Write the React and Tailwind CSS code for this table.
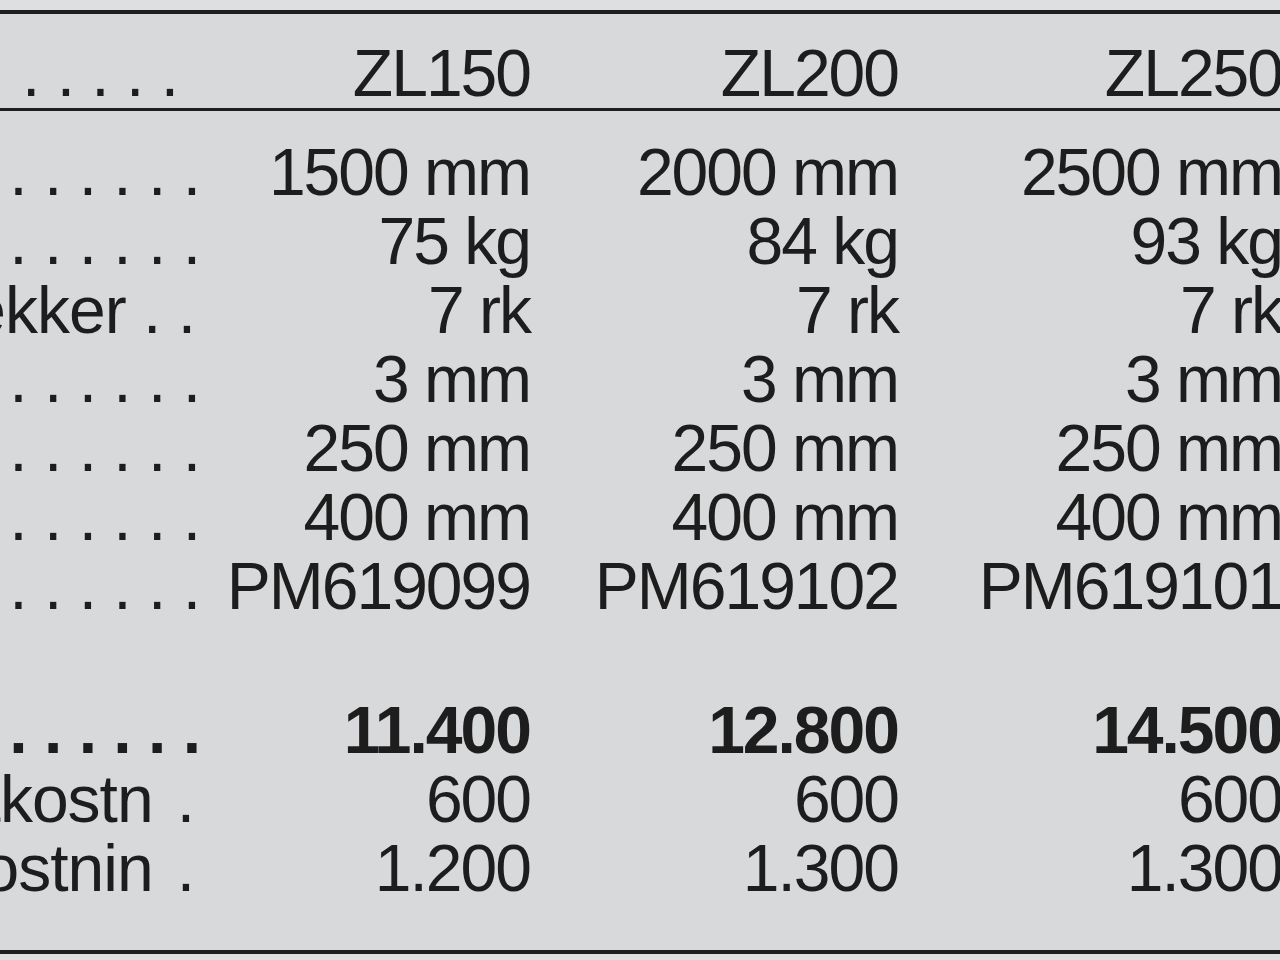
import React from "react";

const rows = [
  { label: "Arbeidsbredde . . . . . . . . . .", values: ["1500 mm", "2000 mm", "2500 mm"] },
  { label: "Vekt . . . . . . . . . . . . . .", values: ["75 kg", "84 kg", "93 kg"] },
  { label: "Antall tinderekker . .", values: ["7 rk", "7 rk", "7 rk"], pad: "pr-[5px]" },
  { label: "Tindetykkelse . . . . . . . . . .", values: ["3 mm", "3 mm", "3 mm"] },
  { label: "Tindelengde . . . . . . . . . . .", values: ["250 mm", "250 mm", "250 mm"] },
  { label: "Høyde . . . . . . . . . . . . . .", values: ["400 mm", "400 mm", "400 mm"] },
  { label: "Varenummer . . . . . . . . . . .", values: ["PM619099", "PM619102", "PM619101"] },
];

const prices = [
  { label: "Pris eks. mva . . . . . . . . . . .", values: ["11.400", "12.800", "14.500"], bold: true },
  { label: "Fraktkostn", tail: true, values: ["600", "600", "600"], pad: "pr-[6px]" },
  { label: "Monteringskostnin", tail: true, values: ["1.200", "1.300", "1.300"], pad: "pr-[6px]" },
];

const colW = ["w-[330px]", "w-[368px]", "w-[384px]"];

function Row({ label, values, bold, tail, pad = "" }) {
  return (
    <div className={`flex h-[69px] items-center leading-[69px] ${bold ? "font-bold" : ""}`}>
      <div className={`flex w-[200px] shrink-0 justify-end overflow-hidden whitespace-pre tracking-[-1px] ${pad}`}>
        <span>
          {label}
          {tail && <span className="ml-[24px]">.</span>}
        </span>
      </div>
      {values.map((v, i) => (
        <div
          key={i}
          className={`${colW[i]} shrink-0 whitespace-nowrap text-right ${bold ? "tracking-[-2px]" : "tracking-[-2px]"}`}
        >
          {v}
        </div>
      ))}
    </div>
  );
}

export default function App() {
  return (
    <div
      className="h-[960px] w-[1280px] overflow-hidden bg-[#d8d9db] text-[66px] text-[#1d1d1d]"
      style={{ fontFamily: '"Liberation Sans", Arial, sans-serif' }}
    >
      <div className="w-[1340px]">
        <div className="h-[10px] bg-[#dedfe1]" />
        <div className="border-t-4 border-b-[3px] border-[#1e1e1e] pt-[25px]">
          <Row label="Modell . . . . . . . . ." values={["ZL150", "ZL200", "ZL250"]} pad="pr-[22px]" />
        </div>
        <div className="pt-[27px]">
          {rows.map((r, i) => (
            <Row key={i} {...r} />
          ))}
          <div className="h-[75px]" />
          {prices.map((r, i) => (
            <Row key={i} {...r} />
          ))}
          <div className="h-[47px]" />
        </div>
        <div className="h-[4px] bg-[#1e1e1e]" />
        <div className="h-[10px] bg-[#dedfe1]" />
      </div>
    </div>
  );
}
